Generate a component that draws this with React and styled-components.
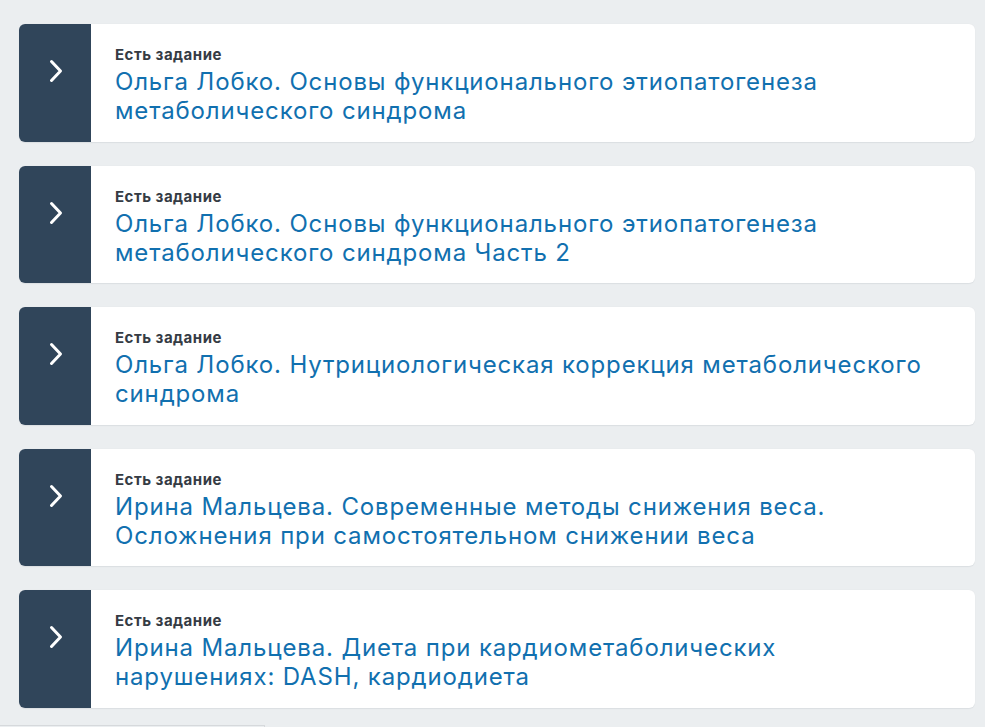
import React from "react";
import styled, { createGlobalStyle } from "styled-components";

const Global = createGlobalStyle`
  html, body { margin: 0; padding: 0; background: #ebeef0; }
  body { font-family: Inter, "Noto Sans", "Liberation Sans", sans-serif; }
`;

const Page = styled.div`
  padding: 24px 10px 0 19px;
  box-sizing: border-box;
  width: 985px;
`;

const List = styled.div`
  display: flex;
  flex-direction: column;
  gap: 24px;
`;

const Card = styled.div`
  display: flex;
  background: #ffffff;
  border-radius: 6px;
  overflow: hidden;
  min-height: 117.5px;
  box-shadow: 0 0.5px 1px rgba(40, 55, 70, 0.08);
`;

const Toggle = styled.div`
  flex: 0 0 72px;
  background: #30455a;
  display: flex;
  justify-content: center;
  align-items: flex-start;
  padding-top: 35px;
  box-sizing: border-box;
  color: #ffffff;
`;

const Body = styled.div`
  flex: 1;
  padding: 22px 40px 16.5px 24px;
  display: flex;
  flex-direction: column;
  gap: 3px;
`;

const Label = styled.div`
  font-size: 15px;
  line-height: 18px;
  font-weight: 700;
  color: #353b44;
  letter-spacing: 0.5px;
`;

const Title = styled.div`
  font-size: 24px;
  line-height: 29px;
  font-weight: 400;
  color: #1170af;
  letter-spacing: 0.85px;
`;

const Footer = styled.div`
  margin: 17.5px 0 0 -19px;
  width: 264px;
  height: 20px;
  border-top: 1px solid #d6d9dc;
  border-right: 1px solid #d6d9dc;
`;

const Chevron = () => (
  <svg width="24" height="24" viewBox="0 0 24 24" fill="none">
    <path d="M8.5 2.5 L17.5 12 L8.5 21.5" stroke="currentColor" strokeWidth="3" strokeLinecap="round" strokeLinejoin="round" />
  </svg>
);

const items = [
  "Ольга Лобко. Основы функционального этиопатогенеза метаболического синдрома",
  "Ольга Лобко. Основы функционального этиопатогенеза метаболического синдрома Часть 2",
  "Ольга Лобко. Нутрициологическая коррекция метаболического синдрома",
  "Ирина Мальцева. Современные методы снижения веса. Осложнения при самостоятельном снижении веса",
  "Ирина Мальцева. Диета при кардиометаболических нарушениях: DASH, кардиодиета",
];

export default function App() {
  return (
    <>
      <Global />
      <Page>
        <List>
          {items.map((t, i) => (
            <Card key={i}>
              <Toggle>
                <Chevron />
              </Toggle>
              <Body>
                <Label>Есть задание</Label>
                <Title>{t}</Title>
              </Body>
            </Card>
          ))}
        </List>
        <Footer />
      </Page>
    </>
  );
}
